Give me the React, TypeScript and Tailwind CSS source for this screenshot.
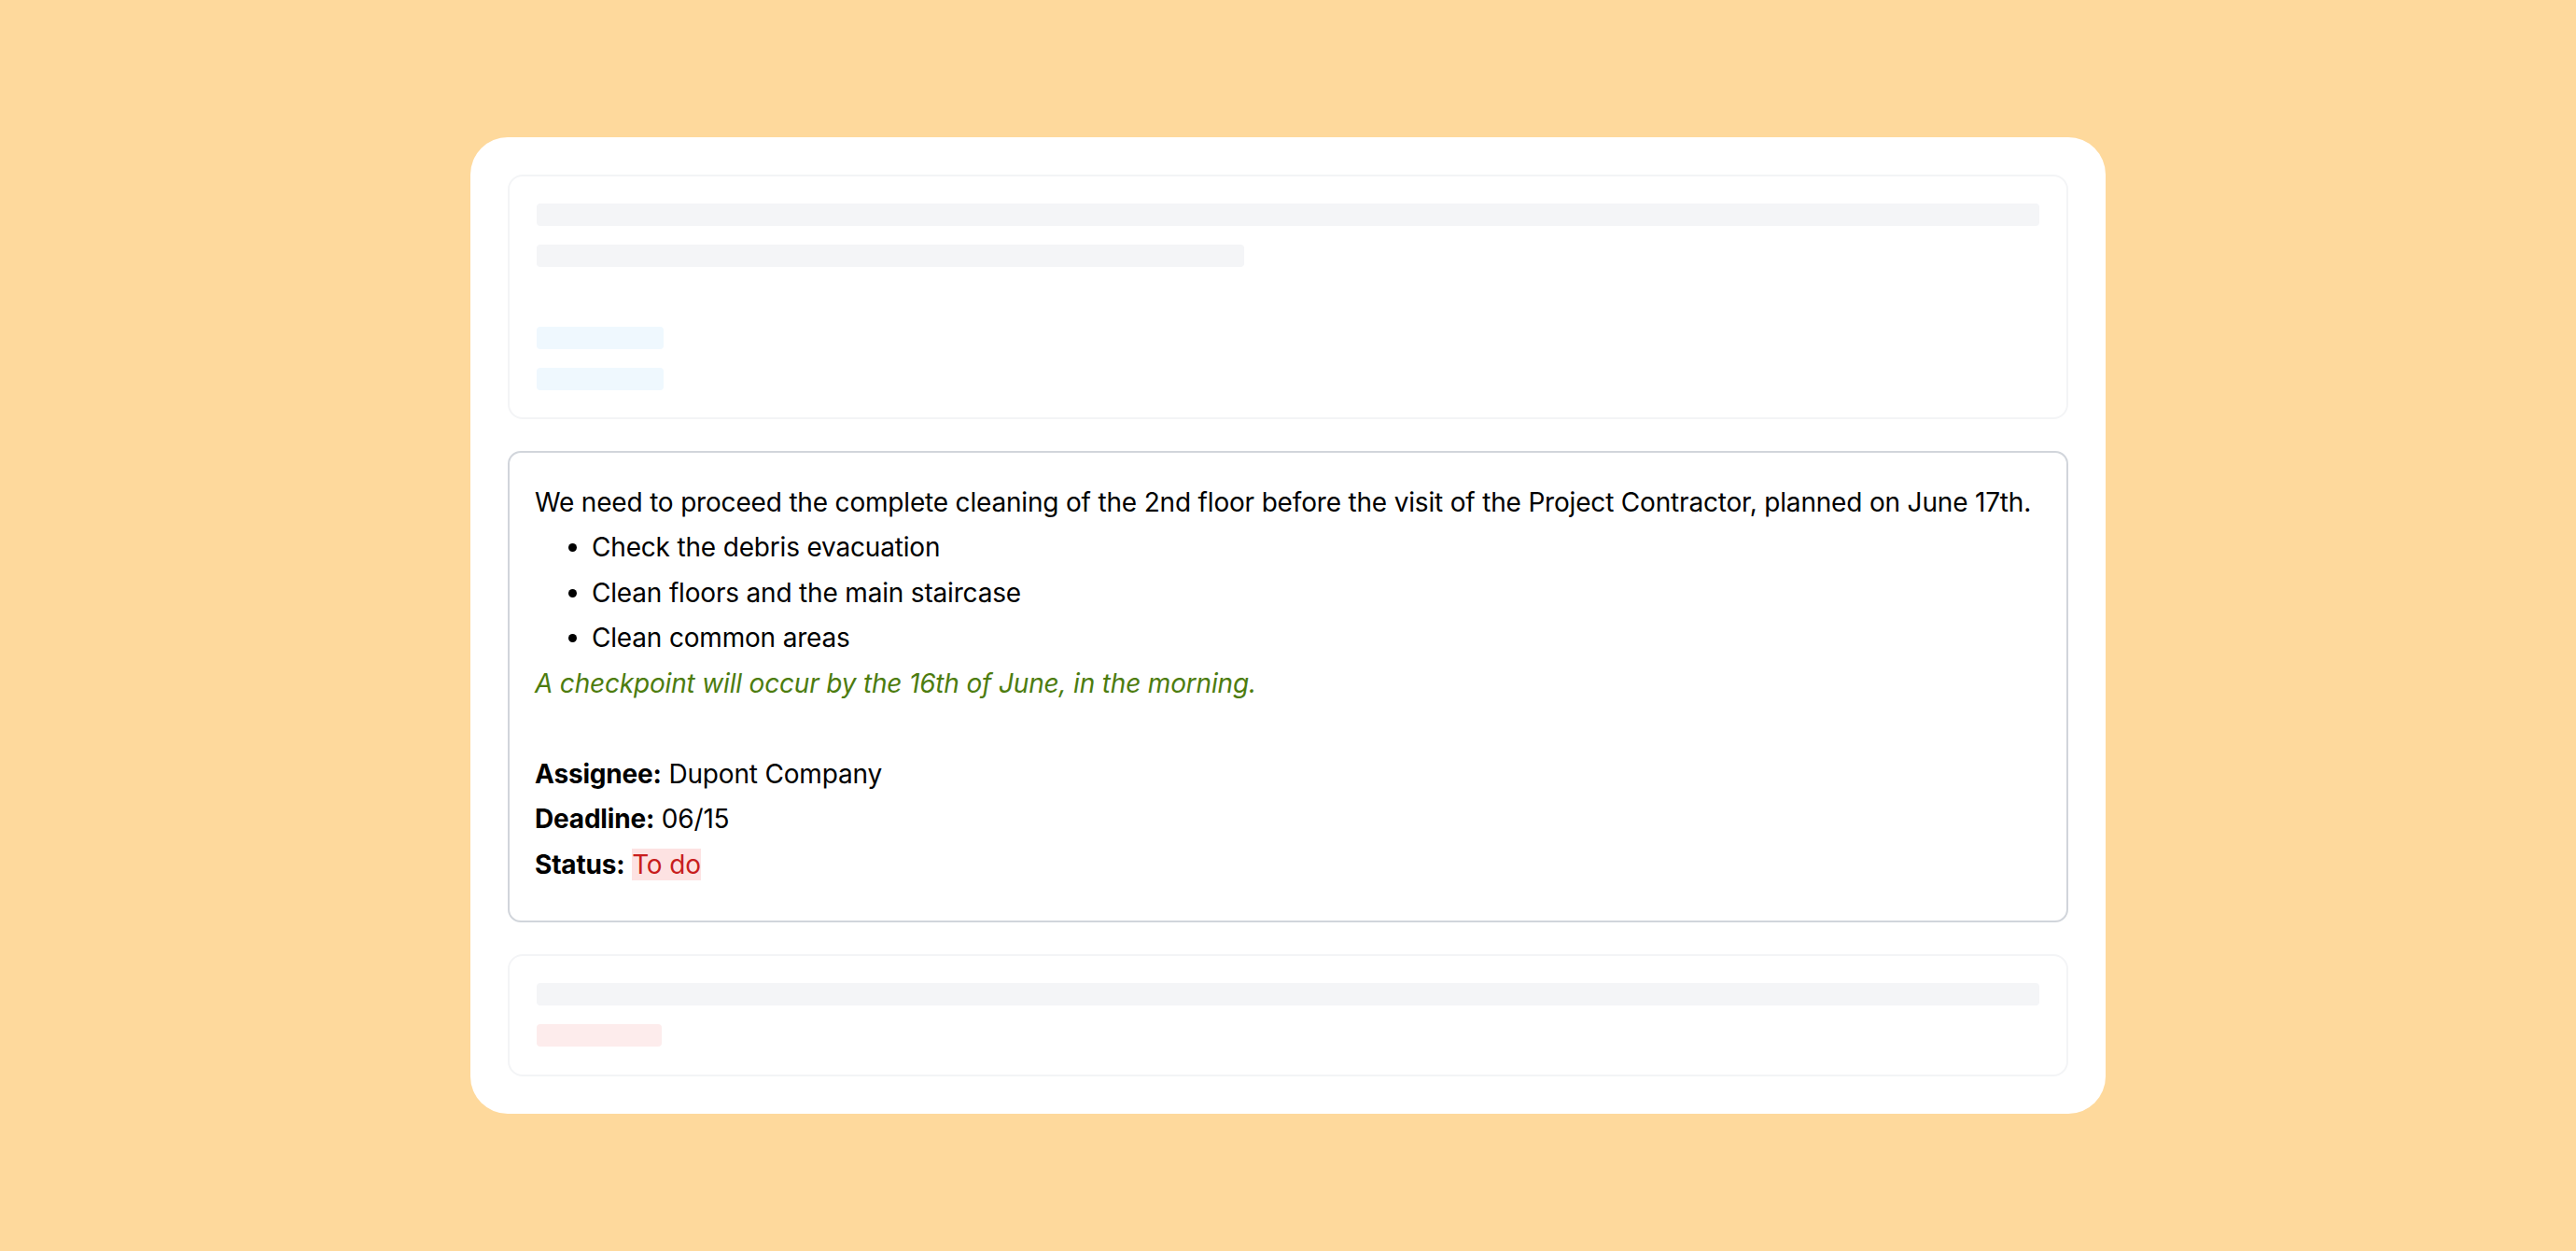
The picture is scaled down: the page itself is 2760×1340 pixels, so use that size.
function SkeletonBar({ className }: { className: string }) {
  return <div className={`h-6 rounded ${className}`} />;
}

function TaskCard() {
  return (
    <div
      className="rounded-[14px] border-2 border-[#d1d5db] bg-white pl-[27px] pr-[20px] pt-[29px] pb-[36px] text-[28px] leading-[48.5px] tracking-[-0.18px] text-black"
      style={{ fontFamily: "Inter, 'Noto Sans', sans-serif" }}
    >
      <p className="whitespace-nowrap">
        We need to proceed the complete cleaning of the 2nd floor before the visit of the Project
        Contractor, planned on June 17th.
      </p>
      <ul className="list-disc pl-[61px]">
        <li>Check the debris evacuation</li>
        <li>Clean floors and the main staircase</li>
        <li>Clean common areas</li>
      </ul>
      <p className="italic text-[#4d7c0f]">A checkpoint will occur by the 16th of June, in the morning.</p>
      <p>&nbsp;</p>
      <p>
        <span className="font-bold">Assignee:</span> Dupont Company
      </p>
      <p>
        <span className="font-bold">Deadline:</span> 06/15
      </p>
      <p>
        <span className="font-bold">Status:</span>{" "}
        <span className="bg-[#fde2e2] text-[#c81e1e]">To do</span>
      </p>
    </div>
  );
}

export default function App() {
  return (
    <div className="flex min-h-[1340px] w-full items-center justify-center bg-[#fed99c]">
      <div className="flex w-[1752px] flex-col gap-[34px] rounded-[40px] bg-white p-10">
        {/* placeholder above */}
        <div className="flex flex-col gap-5 rounded-2xl border-2 border-[#f3f4f6] p-[29px]">
          <SkeletonBar className="w-full bg-[#f4f5f7]" />
          <SkeletonBar className="w-[758px] bg-[#f4f5f7]" />
          <div className="h-6" />
          <SkeletonBar className="w-[136px] bg-[#eff8fe]" />
          <SkeletonBar className="w-[136px] bg-[#eff8fe]" />
        </div>

        <TaskCard />

        {/* placeholder below */}
        <div className="flex flex-col gap-5 rounded-2xl border-2 border-[#f3f4f6] px-[29px] pt-[29px] pb-[30px]">
          <SkeletonBar className="w-full bg-[#f4f5f7]" />
          <SkeletonBar className="w-[134px] bg-[#fdecec]" />
        </div>
      </div>
    </div>
  );
}
